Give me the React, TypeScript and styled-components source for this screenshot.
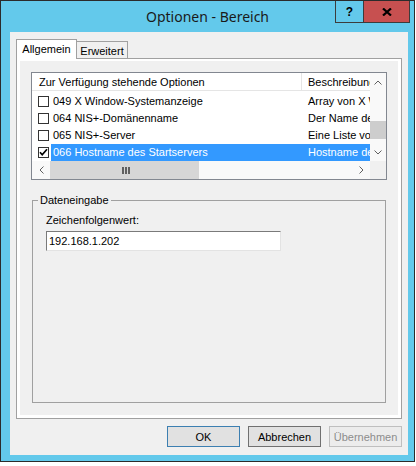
import React from "react";
import styled, { createGlobalStyle } from "styled-components";

const GlobalStyle = createGlobalStyle`
  html, body {
    margin: 0;
    padding: 0;
    background: #fff;
  }
  body {
    font-family: "Liberation Sans", Arial, sans-serif;
    font-size: 11px;
    color: #000;
  }
`;

const Window = styled.div`
  box-sizing: border-box;
  width: 415px;
  height: 462px;
  border: 1px solid #2b2b2b;
  background: #63c9eb;
  display: flex;
  flex-direction: column;
`;

const TitleBar = styled.div`
  height: 31px;
  flex: none;
  display: grid;
  grid-template-columns: 1fr auto 1fr;
  align-items: start;
`;

const Title = styled.div`
  grid-column: 2;
  line-height: 31px;
  font-family: "Noto Sans", "Open Sans", sans-serif;
  font-size: 14px;
  color: #1a1a1a;
  white-space: nowrap;
`;

const CaptionButtons = styled.div`
  grid-column: 3;
  justify-self: end;
  display: flex;
  margin-right: 4px;
  border: 1px solid #3c3c3c;
  border-top: none;
`;

const CaptionButton = styled.div<{ $close?: boolean }>`
  width: ${(p) => (p.$close ? 45 : 27)}px;
  height: 21px;
  display: flex;
  align-items: center;
  justify-content: center;
  background: ${(p) => (p.$close ? "#c75050" : "transparent")};
  border-left: ${(p) => (p.$close ? "1px solid #3c3c3c" : "none")};
  font-family: "Liberation Sans", Arial, sans-serif;
  font-weight: bold;
  font-size: 12px;
  color: #000;
`;

const Client = styled.div`
  flex: 1;
  margin: 0 6px 6px 9px;
  background: #f0f0f0;
  padding: 7px 6px 8px 6px;
  display: flex;
  flex-direction: column;
`;

const TabStrip = styled.div`
  height: 19px;
  display: flex;
  align-items: flex-end;
`;

const Tab = styled.div<{ $active?: boolean }>`
  box-sizing: border-box;
  width: ${(p) => (p.$active ? 61 : 51)}px;
  height: ${(p) => (p.$active ? 20 : 17)}px;
  margin-bottom: ${(p) => (p.$active ? -1 : 0)}px;
  border: 1px solid #a0a0a0;
  border-bottom: none;
  border-left: ${(p) => (p.$active ? "1px solid #a0a0a0" : "none")};
  background: ${(p) => (p.$active ? "#fff" : "#f0f0f0")};
  padding-top: 3px;
  line-height: 13px;
  text-align: center;
  position: relative;
  z-index: ${(p) => (p.$active ? 1 : 0)};
`;

const TabPanel = styled.div`
  box-sizing: border-box;
  height: 361px;
  border: 1px solid #a0a0a0;
  background: #fff;
  padding: 2px 3px 3px 3px;
  display: flex;
`;

const Page = styled.div`
  flex: 1;
  background: #f0f0f0;
  padding: 11px 11px 12px 11px;
  display: flex;
  flex-direction: column;
`;

const ListView = styled.div`
  box-sizing: border-box;
  height: 108px;
  flex: none;
  border: 1px solid #828790;
  background: #fff;
  display: grid;
  grid-template-columns: 1fr 16px;
  grid-template-rows: 1fr 18px;
`;

const ListMain = styled.div`
  overflow: hidden;
  min-width: 0;
`;

const Header = styled.div`
  box-sizing: border-box;
  height: 18px;
  display: flex;
  border-bottom: 1px solid #e5e5e5;
  white-space: nowrap;
`;

const HeaderCell = styled.div<{ $width?: number }>`
  box-sizing: border-box;
  flex: ${(p) => (p.$width ? "none" : "1")};
  width: ${(p) => (p.$width ? `${p.$width}px` : "auto")};
  padding: 3px 0 0 ${(p) => (p.$width ? 7 : 6)}px;
  line-height: 13px;
  border-right: ${(p) => (p.$width ? "1px solid #e5e5e5" : "none")};
  overflow: hidden;
`;

const Rows = styled.div`
  padding-top: 2px;
`;

const Row = styled.div`
  height: 17px;
  display: flex;
  align-items: center;
`;

const CheckCell = styled.div`
  flex: none;
  width: 19px;
  padding-left: 6px;
  box-sizing: border-box;
  display: flex;
  align-items: center;
`;

const CheckBox = styled.div`
  box-sizing: border-box;
  width: 11px;
  height: 11px;
  border: 1px solid #333;
  background: #fff;
  display: flex;
`;

const RowBody = styled.div<{ $selected?: boolean }>`
  flex: 1;
  min-width: 0;
  height: 17px;
  display: flex;
  line-height: 17px;
  white-space: nowrap;
  background: ${(p) => (p.$selected ? "#3399ff" : "transparent")};
  color: ${(p) => (p.$selected ? "#fff" : "#000")};
`;

const NameText = styled.div`
  flex: none;
  width: 251px;
  box-sizing: border-box;
  padding-left: 2px;
  overflow: hidden;
`;

const DescText = styled.div`
  flex: 1;
  padding-left: 6px;
  overflow: hidden;
`;

const VScroll = styled.div`
  display: flex;
  flex-direction: column;
  background: #f9f9f9;
`;

const HScroll = styled.div`
  display: flex;
  background: #f9f9f9;
`;

const ScrollArrow = styled.div<{ $w?: number; $h?: number }>`
  flex: none;
  width: ${(p) => (p.$w ? `${p.$w}px` : "auto")};
  height: ${(p) => (p.$h ? `${p.$h}px` : "auto")};
  display: flex;
  align-items: center;
  justify-content: center;
`;

const VTrack = styled.div`
  flex: 1;
  padding-top: 30px;
`;

const VThumb = styled.div`
  height: 18px;
  background: #cdcdcd;
`;

const HThumb = styled.div`
  flex: none;
  width: 149px;
  background: #d6d6d6;
  display: flex;
  align-items: center;
  justify-content: center;
  padding-left: 3px;
  box-sizing: border-box;
`;

const HTrack = styled.div`
  flex: 1;
`;

const Corner = styled.div`
  background: #f0f0f0;
`;

const GroupBox = styled.fieldset`
  flex: 1;
  min-width: 0;
  margin: 14px 1px 0 1px;
  padding: 0 13px;
  border: 1px solid #a0a0a0;
`;

const Legend = styled.legend`
  padding: 0 2px;
  margin-left: -8px;
  line-height: 13px;
`;

const FieldLabel = styled.label`
  display: block;
  margin-top: 7px;
  line-height: 13px;
`;

const TextInput = styled.input`
  display: block;
  box-sizing: border-box;
  width: 235px;
  height: 20px;
  margin: 4px 0 0 0;
  padding: 0 2px;
  border: 1px solid;
  border-color: #7a7a7a #e3e3e3 #e3e3e3 #7a7a7a;
  background: #fff;
  font-family: "Liberation Sans", Arial, sans-serif;
  font-size: 11px;
  color: #000;
  outline: none;
`;

const ButtonRow = styled.div`
  margin-top: 7px;
  display: flex;
  justify-content: flex-end;
  gap: 8px;
`;

const DialogButton = styled.button<{ $variant?: "default" | "disabled" }>`
  box-sizing: border-box;
  width: 73px;
  height: 21px;
  padding: 0;
  font-family: "Liberation Sans", Arial, sans-serif;
  font-size: 11px;
  border: 1px solid
    ${(p) => (p.$variant === "default" ? "#3c7fb1" : p.$variant === "disabled" ? "#bfbfbf" : "#707070")};
  background: ${(p) => (p.$variant === "disabled" ? "#ececec" : "#e1e1e1")};
  color: ${(p) => (p.$variant === "disabled" ? "#8d8d8d" : "#000")};
`;

const Chevron = ({ dir }: { dir: "up" | "down" | "left" | "right" }) => {
  const vertical = dir === "up" || dir === "down";
  const w = vertical ? 8 : 5;
  const h = vertical ? 5 : 8;
  const points = {
    up: "0.5,4.5 4,1 7.5,4.5",
    down: "0.5,0.5 4,4 7.5,0.5",
    left: "4.5,0.5 1,4 4.5,7.5",
    right: "0.5,0.5 4,4 0.5,7.5",
  }[dir];
  return (
    <svg width={w} height={h} viewBox={`0 0 ${w} ${h}`}>
      <polyline points={points} fill="none" stroke="#606060" strokeWidth="1" />
    </svg>
  );
};

const CheckMark = () => (
  <svg width="9" height="9" viewBox="0 0 9 9">
    <polyline points="1,4.3 3.2,6.8 8,1.2" fill="none" stroke="#000" strokeWidth="1.7" />
  </svg>
);

const items = [
  { name: "049 X Window-Systemanzeige", desc: "Array von X Window-Systemanzeigen", checked: false },
  { name: "064 NIS+-Domänenname", desc: "Der Name der NIS+-Domäne", checked: false },
  { name: "065 NIS+-Server", desc: "Eine Liste von NIS+-Servern", checked: false },
  { name: "066 Hostname des Startservers", desc: "Hostname des Startservers", checked: true, selected: true },
];

const App = () => (
  <>
    <GlobalStyle />
    <Window>
      <TitleBar>
        <Title>Optionen - Bereich</Title>
        <CaptionButtons>
          <CaptionButton>?</CaptionButton>
          <CaptionButton $close>
            <svg width="10" height="8" viewBox="0 0 10 8">
              <path d="M1 0.5 L9 7.5 M9 0.5 L1 7.5" stroke="#000" strokeWidth="2.2" />
            </svg>
          </CaptionButton>
        </CaptionButtons>
      </TitleBar>
      <Client>
        <TabStrip>
          <Tab $active>Allgemein</Tab>
          <Tab>Erweitert</Tab>
        </TabStrip>
        <TabPanel>
          <Page>
            <ListView>
              <ListMain>
                <Header>
                  <HeaderCell $width={270}>Zur Verfügung stehende Optionen</HeaderCell>
                  <HeaderCell>Beschreibung</HeaderCell>
                </Header>
                <Rows>
                  {items.map((it) => (
                    <Row key={it.name}>
                      <CheckCell>
                        <CheckBox>{it.checked && <CheckMark />}</CheckBox>
                      </CheckCell>
                      <RowBody $selected={it.selected}>
                        <NameText>{it.name}</NameText>
                        <DescText>{it.desc}</DescText>
                      </RowBody>
                    </Row>
                  ))}
                </Rows>
              </ListMain>
              <VScroll>
                <ScrollArrow $h={18}>
                  <Chevron dir="up" />
                </ScrollArrow>
                <VTrack>
                  <VThumb />
                </VTrack>
                <ScrollArrow $h={18}>
                  <Chevron dir="down" />
                </ScrollArrow>
              </VScroll>
              <HScroll>
                <ScrollArrow $w={18}>
                  <Chevron dir="left" />
                </ScrollArrow>
                <HThumb>
                  <svg width="8" height="7" viewBox="0 0 8 7">
                    <rect x="0" y="0" width="2" height="7" fill="#606060" />
                    <rect x="3" y="0" width="2" height="7" fill="#606060" />
                    <rect x="6" y="0" width="2" height="7" fill="#606060" />
                  </svg>
                </HThumb>
                <HTrack />
                <ScrollArrow $w={17}>
                  <Chevron dir="right" />
                </ScrollArrow>
              </HScroll>
              <Corner />
            </ListView>
            <GroupBox>
              <Legend>Dateneingabe</Legend>
              <FieldLabel>Zeichenfolgenwert:</FieldLabel>
              <TextInput readOnly value="192.168.1.202" />
            </GroupBox>
          </Page>
        </TabPanel>
        <ButtonRow>
          <DialogButton $variant="default">OK</DialogButton>
          <DialogButton>Abbrechen</DialogButton>
          <DialogButton $variant="disabled">Übernehmen</DialogButton>
        </ButtonRow>
      </Client>
    </Window>
  </>
);

export default App;
